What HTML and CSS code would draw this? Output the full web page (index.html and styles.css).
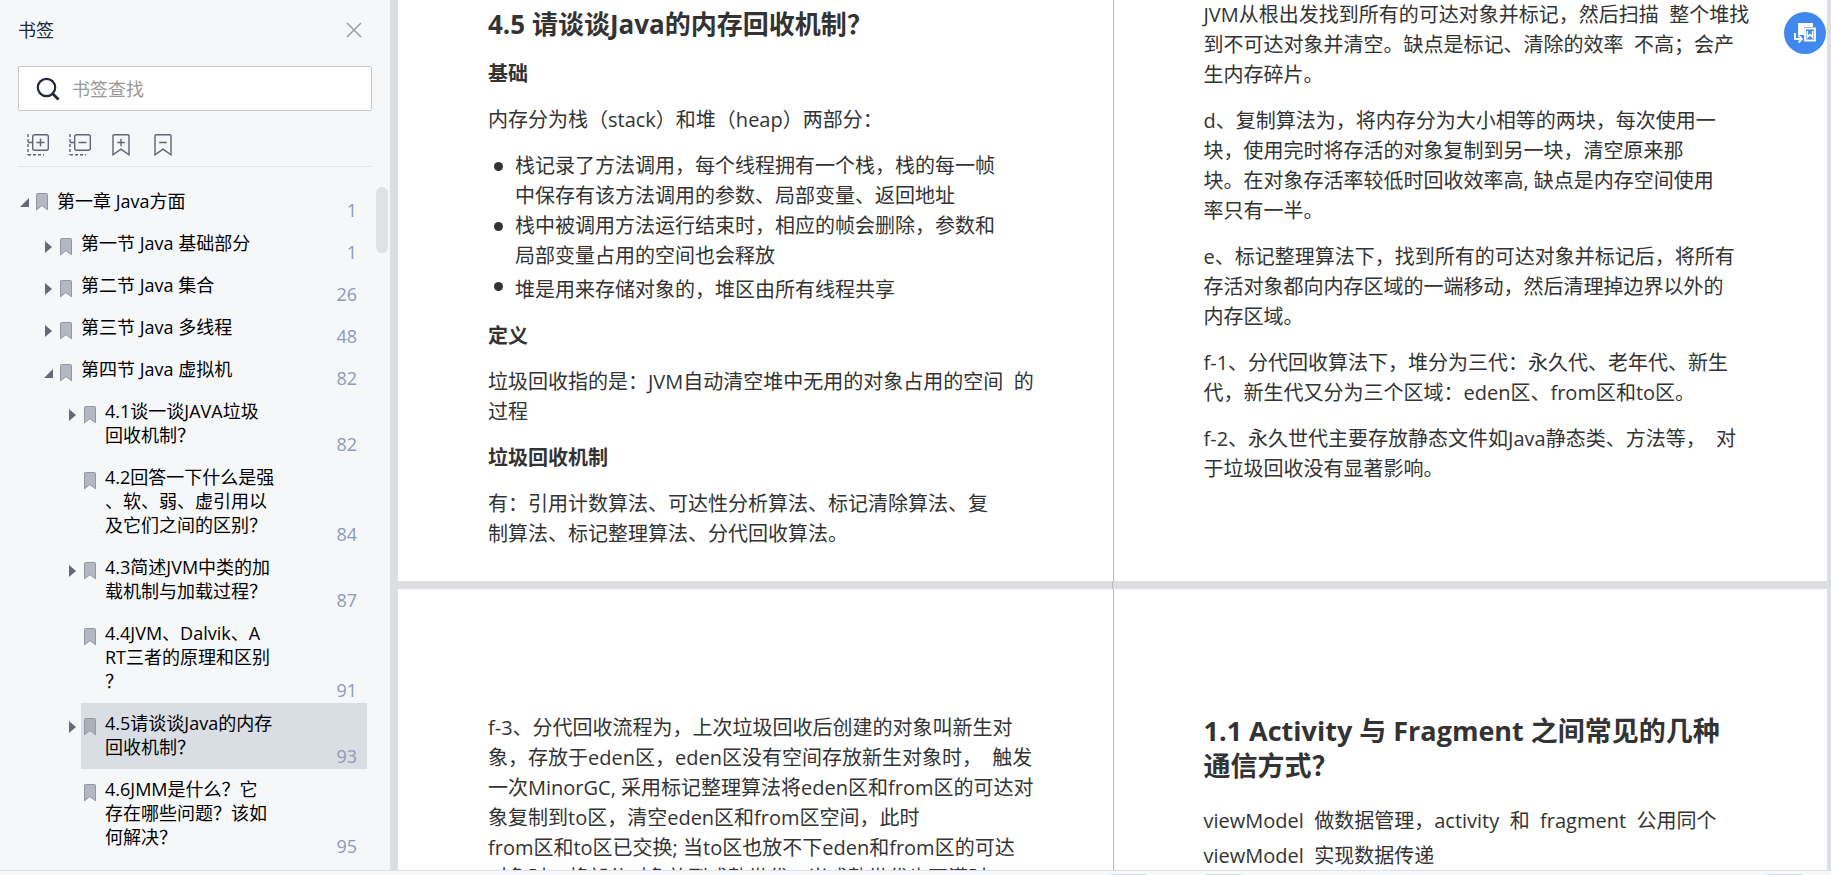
FILE: index.html
```html
<!DOCTYPE html>
<html lang="zh-CN">
<head>
<meta charset="utf-8">
<title>书签</title>
<link rel="stylesheet" href="styles.css">
</head>
<body>
<svg class="defs" aria-hidden="true">
  <symbol id="mark" viewBox="0 0 12 18"><path d="M.5 1.5a1 1 0 0 1 1-1h9a1 1 0 0 1 1 1v15.3L6 12.6.5 16.8z" fill="#b4b8c2" stroke="#9296a1"/></symbol>
  <symbol id="closed" viewBox="0 0 10 14"><path d="M1 1l7 6-7 6z" fill="#636975"/></symbol>
  <symbol id="open" viewBox="0 0 10 14"><path d="M9 3v9H0z" fill="#636975"/></symbol>
</svg>
<div class="app">
  <div class="main">
    <aside class="sidebar">
      <header class="side-head">
        <h2 class="side-title">书签</h2>
        <button class="icon-btn" aria-label="关闭"><svg width="16" height="16" viewBox="0 0 16 16"><path d="M1 1l14 14M15 1L1 15" stroke="#9a9ea8" stroke-width="1.5"/></svg></button>
      </header>
      <label class="search">
        <svg width="24" height="24" viewBox="0 0 24 24" fill="none" stroke="#22283a" stroke-width="2.2"><circle cx="10.5" cy="10.5" r="8.7"/><path d="M16.5 16.5l6 6" stroke-width="2.8"/></svg>
        <input class="search-input" type="text" placeholder="书签查找" aria-label="书签查找">
      </label>
      <div class="tools">
        <button class="icon-btn" aria-label="展开"><svg width="22" height="22" viewBox="0 0 22 22" fill="none" stroke="#5f6573" stroke-width="1.4"><rect x="5.7" y=".7" width="15.6" height="15.6" rx="2"/><path d="M9.5 8.5h8M13.5 4.5v8M1 8.5h4.5"/><path d="M1 0v21" stroke-dasharray="3 2"/><path d="M1 20.7h16" stroke-dasharray="3 2"/></svg></button>
        <button class="icon-btn" aria-label="折叠"><svg width="22" height="22" viewBox="0 0 22 22" fill="none" stroke="#5f6573" stroke-width="1.4"><rect x="5.7" y=".7" width="15.6" height="15.6" rx="2"/><path d="M9.5 8.5h8M1 8.5h4.5"/><path d="M1 0v21" stroke-dasharray="3 2"/><path d="M1 20.7h16" stroke-dasharray="3 2"/></svg></button>
        <button class="icon-btn" aria-label="添加书签"><svg width="22" height="22" viewBox="0 0 22 22" fill="none" stroke="#5f6573" stroke-width="1.4"><path d="M2 1.7a1 1 0 0 1 1-1h14a1 1 0 0 1 1 1v19.1l-8-5.6-8 5.6zM6.2 8.5h7.6M10 4.7v7.6"/></svg></button>
        <button class="icon-btn" aria-label="删除书签"><svg width="22" height="22" viewBox="0 0 22 22" fill="none" stroke="#5f6573" stroke-width="1.4"><path d="M2 1.7a1 1 0 0 1 1-1h14a1 1 0 0 1 1 1v19.1l-8-5.6-8 5.6zM6.2 8.5h7.6"/></svg></button>
      </div>
      <div class="tree-area">
        <ul class="tree">
          <li>
            <div class="row root"><svg class="twisty"><use href="#open"/></svg><div class="entry"><svg class="mark"><use href="#mark"/></svg><span class="label">第一章 Java方面</span><span class="num">1</span></div></div>
            <ul class="branch">
              <li><div class="row"><svg class="twisty"><use href="#closed"/></svg><div class="entry"><svg class="mark"><use href="#mark"/></svg><span class="label">第一节 Java 基础部分</span><span class="num">1</span></div></div></li>
              <li><div class="row"><svg class="twisty"><use href="#closed"/></svg><div class="entry"><svg class="mark"><use href="#mark"/></svg><span class="label">第二节 Java 集合</span><span class="num">26</span></div></div></li>
              <li><div class="row"><svg class="twisty"><use href="#closed"/></svg><div class="entry"><svg class="mark"><use href="#mark"/></svg><span class="label">第三节 Java 多线程</span><span class="num">48</span></div></div></li>
              <li>
                <div class="row"><svg class="twisty"><use href="#open"/></svg><div class="entry"><svg class="mark"><use href="#mark"/></svg><span class="label">第四节 Java 虚拟机</span><span class="num">82</span></div></div>
                <ul class="branch">
                  <li><div class="row"><svg class="twisty"><use href="#closed"/></svg><div class="entry"><svg class="mark"><use href="#mark"/></svg><span class="label">4.1谈一谈JAVA垃圾<br>回收机制？</span><span class="num">82</span></div></div></li>
                  <li><div class="row"><svg class="twisty"></svg><div class="entry"><svg class="mark"><use href="#mark"/></svg><span class="label">4.2回答一下什么是强<br>、软、弱、虚引用以<br>及它们之间的区别？</span><span class="num">84</span></div></div></li>
                  <li><div class="row"><svg class="twisty"><use href="#closed"/></svg><div class="entry"><svg class="mark"><use href="#mark"/></svg><span class="label">4.3简述JVM中类的加<br>载机制与加载过程？</span><span class="num">87</span></div></div></li>
                  <li><div class="row"><svg class="twisty"></svg><div class="entry"><svg class="mark"><use href="#mark"/></svg><span class="label">4.4JVM、Dalvik、A<br>RT三者的原理和区别<br>？</span><span class="num">91</span></div></div></li>
                  <li><div class="row"><svg class="twisty"><use href="#closed"/></svg><div class="entry selected"><svg class="mark"><use href="#mark"/></svg><span class="label">4.5请谈谈Java的内存<br>回收机制？</span><span class="num">93</span></div></div></li>
                  <li><div class="row"><svg class="twisty"></svg><div class="entry"><svg class="mark"><use href="#mark"/></svg><span class="label">4.6JMM是什么？它<br>存在哪些问题？该如<br>何解决？</span><span class="num">95</span></div></div></li>
                </ul>
              </li>
            </ul>
          </li>
        </ul>
        <div class="scroll"><div class="thumb"></div></div>
      </div>
    </aside>
    <main class="viewer">
      <div class="pages">
        <article class="page">
          <h3 class="title">4.5 请谈谈Java的内存回收机制？</h3>
          <h4 class="sub">基础</h4>
          <p>内存分为栈（stack）和堆（heap）两部分：</p>
          <ul class="bullets">
            <li><span>栈记录了方法调用，每个线程拥有一个栈，栈的每一帧<br>中保存有该方法调用的参数、局部变量、返回地址</span></li>
            <li><span>栈中被调用方法运行结束时，相应的帧会删除，参数和<br>局部变量占用的空间也会释放</span></li>
            <li><span>堆是用来存储对象的，堆区由所有线程共享</span></li>
          </ul>
          <h4 class="sub">定义</h4>
          <p>垃圾回收指的是：JVM自动清空堆中无用的对象占用的空间&nbsp; 的<br>过程</p>
          <h4 class="sub">垃圾回收机制</h4>
          <p>有：引用计数算法、可达性分析算法、标记清除算法、复<br>制算法、标记整理算法、分代回收算法。</p>
        </article>
        <article class="page right flush">
          <p>JVM从根出发找到所有的可达对象并标记，然后扫描&nbsp; 整个堆找<br>到不可达对象并清空。缺点是标记、清除的效率&nbsp; 不高；会产<br>生内存碎片。</p>
          <p>d、复制算法为，将内存分为大小相等的两块，每次使用一<br>块，使用完时将存活的对象复制到另一块，清空原来那<br>块。在对象存活率较低时回收效率高, 缺点是内存空间使用<br>率只有一半。</p>
          <p>e、标记整理算法下，找到所有的可达对象并标记后，将所有<br>存活对象都向内存区域的一端移动，然后清理掉边界以外的<br>内存区域。</p>
          <p>f-1、分代回收算法下，堆分为三代：永久代、老年代、新生<br>代，新生代又分为三个区域：eden区、from区和to区。</p>
          <p>f-2、永久世代主要存放静态文件如Java静态类、方法等，&nbsp; 对<br>于垃圾回收没有显著影响。</p>
        </article>
        <article class="page lower">
          <p>f-3、分代回收流程为，上次垃圾回收后创建的对象叫新生对<br>象，存放于eden区，eden区没有空间存放新生对象时，&nbsp; 触发<br>一次MinorGC, 采用标记整理算法将eden区和from区的可达对<br>象复制到to区，清空eden区和from区空间，此时<br>from区和to区已交换; 当to区也放不下eden和from区的可达<br>对象时，将部分对象放到成熟世代，当成熟世代也不满时</p>
        </article>
        <article class="page right lower">
          <h3 class="title large">1.1 Activity 与 Fragment 之间常见的几种<br>通信方式？</h3>
          <p class="loose">viewModel&nbsp; 做数据管理，activity&nbsp; 和&nbsp; fragment&nbsp; 公用同个<br>viewModel&nbsp; 实现数据传递</p>
        </article>
      </div>
      <button class="float-btn" aria-label="转换"><svg width="24" height="24" viewBox="0 0 24 24"><path d="M5 2h15v4h-9v8H5z" fill="#fff"/><path d="M12 7.500h10v12H12z" fill="none" stroke="#fff" stroke-width="1.800"/><path d="M14.300 10v6.500l2.700-3 2.700 3V10" fill="none" stroke="#fff" stroke-width="1.600"/><path d="M2 12v6h6M5.500 14.500L9 18l-3.500 3.500" fill="none" stroke="#fff" stroke-width="1.800"/></svg></button>
    </main>
  </div>
  <footer class="status"><i class="stub first"></i><i class="stub second"></i><i class="stub"></i></footer>
</div>
</body>
</html>
```
FILE: styles.css
```css
* { box-sizing: border-box; }
body {
  margin: 0;
  font-family: "Open Sans", "Noto Sans CJK SC", sans-serif;
  color: #333;
  background: #f6f7f9;
}
h2, h3, h4, p, ul { margin: 0; padding: 0; }
ul { list-style: none; }
button { border: 0; padding: 0; background: none; }
.defs { display: none; }

.app { display: flex; flex-direction: column; height: 100vh; overflow: hidden; }
.main { display: flex; flex: 1; min-height: 0; }

/* bookmark panel */
.sidebar {
  flex: none;
  display: flex;
  flex-direction: column;
  width: 390px;
  padding-left: 18px;
  background: #f6f7f9;
}
.side-head {
  display: flex;
  align-items: center;
  justify-content: space-between;
  height: 60px;
  margin-right: 28px;
}
.side-title { font-size: 18px; line-height: 24px; font-weight: 400; color: #22283a; }
.icon-btn { display: flex; }
.search {
  display: flex;
  align-items: center;
  gap: 12px;
  height: 45px;
  margin: 6px 18px 0 0;
  padding-left: 17px;
  background: #fff;
  border: 1px solid #c6c8cb;
  border-radius: 2px;
}
.search-input {
  flex: 1;
  min-width: 0;
  border: 0;
  padding: 0;
  outline: 0;
  background: none;
  font: 18px/24px "Open Sans", "Noto Sans CJK SC", sans-serif;
}
.search-input::placeholder { color: #999; opacity: 1; }
.tools {
  display: flex;
  gap: 20px;
  margin-right: 18px;
  padding: 23px 9px 10px;
  border-bottom: 1px solid #e1e4e8;
}
.tree-area { display: flex; flex: 1; min-height: 0; overflow: hidden; padding-top: 14px; }
.tree { flex: 1; padding-left: 2px; font-size: 18px; line-height: 24px; color: #000; }
.branch { padding-left: 24px; }
.row { display: flex; }
.twisty { flex: none; width: 10px; height: 14px; margin: 17px 3px 0 0; }
.entry { display: flex; flex: 1; padding: 8px 10px 0 3px; }
.selected { background: #d9dde4; }
.selected .mark { opacity: .8; filter: brightness(.9); }
.mark { flex: none; width: 12px; height: 18px; margin: 7px 9px 0 0; }
.root .twisty { margin-top: 14px; }
.root .mark { margin-top: 4px; }
.label { flex: 1; white-space: nowrap; padding-bottom: 10px; }
.num { align-self: flex-end; padding-bottom: 1px; color: #8d9ab8; }
.scroll { width: 23px; padding: 6px 2px 0 9px; }
.thumb { height: 66px; border-radius: 6px; background: #dfe2e5; }

/* document */
.viewer {
  position: relative;
  flex: 1;
  min-width: 0;
  overflow: hidden;
  padding: 0 4px 0 8px;
  background: #dddee1;
}
.pages {
  display: grid;
  grid-template-columns: 1fr 1fr;
  row-gap: 8px;
  background: linear-gradient(#b9babc, #b9babc) center / 1px 100% no-repeat;
}
.page {
  display: flex;
  flex-direction: column;
  gap: 16px;
  min-width: 0;
  margin-right: -1px;
  padding: 7px 0 32px 90px;
  background: #fff;
  font-size: 20px;
  line-height: 30px;
  white-space: nowrap;
}
.right { margin-right: 0; border-left: 1px solid #b9babc; }
.flush { padding-top: 0; }
.lower { padding-top: 124px; }
.title { font-size: 26px; line-height: 35px; font-weight: 700; }
.large { margin-bottom: 4px; font-size: 27px; }
.sub { font-size: 20px; font-weight: 700; }
.title + .sub { margin-top: 1px; }
.loose { line-height: 35px; }
.bullets li { display: flex; gap: 12px; }
.bullets li::before {
  content: "";
  flex: none;
  width: 9px;
  height: 9px;
  margin: 11px 0 0 6px;
  border-radius: 50%;
  background: #333;
}
.bullets li:last-child span { padding-top: 4px; }
.float-btn {
  position: absolute;
  top: 12px;
  right: 5px;
  display: flex;
  align-items: center;
  justify-content: center;
  width: 42px;
  height: 42px;
  border-radius: 50%;
  background: #4088ee;
}

.status {
  display: flex;
  justify-content: flex-end;
  align-items: flex-end;
  height: 5px;
  padding-right: 29px;
  border-top: 1px solid #dfe1e8;
  background: #f6f7f9;
}
.stub { width: 35px; height: 1px; background: #d5dde6; }
.first { margin-right: 60px; }
.second { margin-right: 526px; }
```
